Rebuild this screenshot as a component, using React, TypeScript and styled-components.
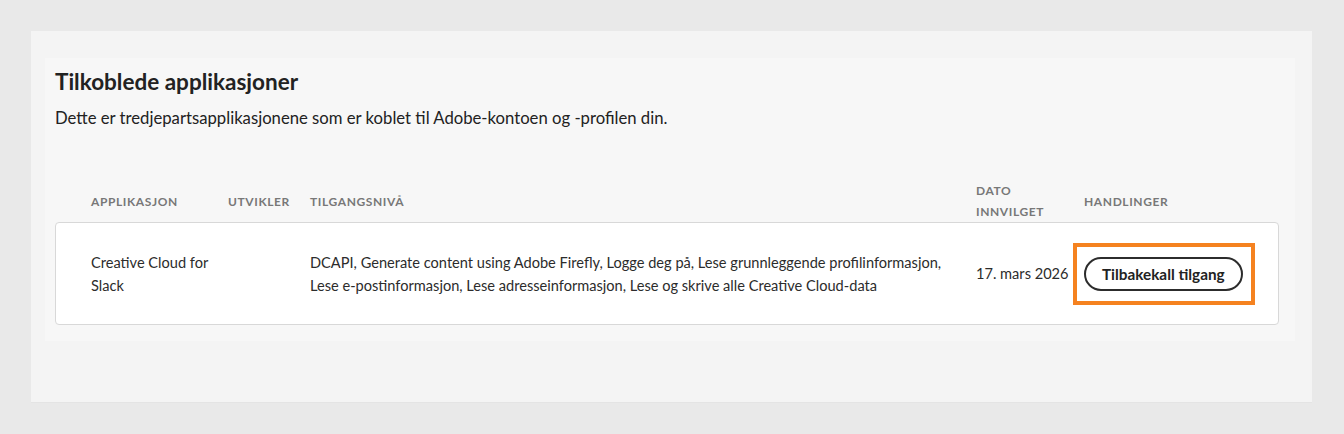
import React, { FC } from "react";
import styled, { createGlobalStyle } from "styled-components";

interface Application {
  name: string;
  developer: string;
  scopes: string;
  granted: string;
}

const apps: Application[] = [
  {
    name: "Creative Cloud for Slack",
    developer: "",
    scopes:
      "DCAPI, Generate content using Adobe Firefly, Logge deg på, Lese grunnleggende profilinformasjon, Lese e-postinformasjon, Lese adresseinformasjon, Lese og skrive alle Creative Cloud-data",
    granted: "17. mars 2026",
  },
];

const GlobalStyle = createGlobalStyle`
  body {
    margin: 0;
    background: #e9e9e9;
    font-family: Lato, "Noto Sans", "Liberation Sans", sans-serif;
    color: #2c2c2c;
  }
`;

const COLUMNS = "35px 137px 82px 666px 108px 1fr";

const App: FC = () => (
  <Page>
    <GlobalStyle />
    <Card>
      <Section>
        <Title>Tilkoblede applikasjoner</Title>
        <Description>
          Dette er tredjepartsapplikasjonene som er koblet til Adobe-kontoen og
          -profilen din.
        </Description>
        <Table>
          <HeaderRow>
            <span />
            <HeaderCell>Applikasjon</HeaderCell>
            <HeaderCell>Utvikler</HeaderCell>
            <HeaderCell>Tilgangsnivå</HeaderCell>
            <HeaderCell>
              Dato
              <br />
              innvilget
            </HeaderCell>
            <HeaderCell>Handlinger</HeaderCell>
          </HeaderRow>
          {apps.map((app) => (
            <Row key={app.name}>
              <span />
              <NameCell>{app.name}</NameCell>
              <Cell>{app.developer}</Cell>
              <ScopeCell>{app.scopes}</ScopeCell>
              <Cell>{app.granted}</Cell>
              <Cell>
                <Highlight>
                  <RevokeButton>Tilbakekall tilgang</RevokeButton>
                </Highlight>
              </Cell>
            </Row>
          ))}
        </Table>
      </Section>
    </Card>
  </Page>
);

export default App;

const Page = styled.div`
  padding: 31px 32px 32px 31px;
`;

const Card = styled.div`
  width: 1281px;
  height: 371px;
  box-sizing: border-box;
  background: #f4f4f4;
  padding: 27px 0 0 14px;
  box-shadow: 0 1px 1px rgba(0, 0, 0, 0.02);
`;

const Section = styled.section`
  width: 1250px;
  height: 283px;
  box-sizing: border-box;
  background: #f7f7f7;
  padding: 10px 0 0 10px;
`;

const Title = styled.h2`
  margin: 0;
  font-size: 22.5px;
  font-weight: 700;
  line-height: 28px;
  color: #222;
`;

const Description = styled.p`
  margin: 10px 0 0;
  font-size: 16.7px;
  line-height: 24px;
  color: #222;
`;

const Table = styled.div`
  margin-top: 49px;
  width: 1224px;
`;

const HeaderRow = styled.div`
  display: grid;
  grid-template-columns: ${COLUMNS};
  align-items: center;
  border: 1px solid transparent;
  border-bottom: none;
`;

const HeaderCell = styled.div`
  font-size: 12px;
  font-weight: 700;
  line-height: 21px;
  letter-spacing: 0.05em;
  text-transform: uppercase;
  color: #787878;
`;

const Row = styled.div`
  display: grid;
  grid-template-columns: ${COLUMNS};
  align-items: center;
  height: 103px;
  box-sizing: border-box;
  background: #fff;
  border: 1px solid #d8d8d8;
  border-radius: 4px;
`;

const Cell = styled.div`
  font-size: 14.6px;
  line-height: 23px;
  color: #2c2c2c;
`;

const NameCell = styled(Cell)`
  padding-right: 16px;
`;

const ScopeCell = styled(Cell)`
  padding-right: 20px;
`;

const Highlight = styled.div`
  display: inline-block;
  margin-left: -11px;
  padding: 10px 8px 10px 7px;
  border: 4px solid #f58220;
`;

const RevokeButton = styled.button`
  display: block;
  height: 34px;
  padding: 0 16px;
  border: 2px solid #2c2c2c;
  border-radius: 17px;
  background: #fff;
  font-family: inherit;
  font-size: 15.3px;
  font-weight: 700;
  color: #222;
  cursor: pointer;
`;
